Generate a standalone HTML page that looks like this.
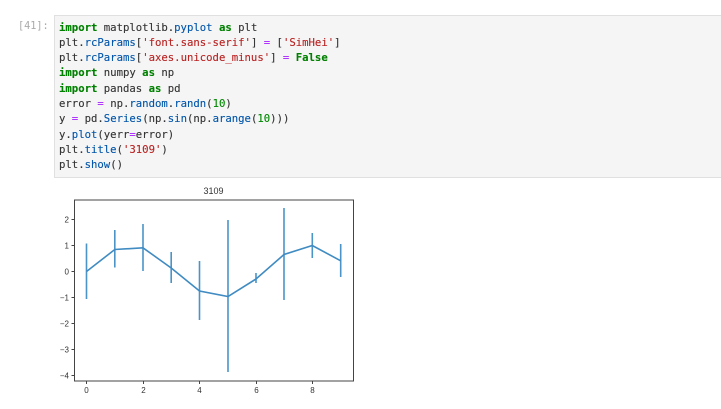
<!DOCTYPE html>
<html><head><meta charset="utf-8"><style>
html,body{margin:0;padding:0;background:#fff;width:721px;height:409px;overflow:hidden}
.cell{position:absolute;left:54px;top:15px;width:667px;height:163px;box-sizing:border-box;background:#f5f5f5;border:1px solid #e0e0e0;border-right:none}
pre{position:absolute;margin:0;left:4px;top:3.5px;font:10.64px/15.33px "DejaVu Sans Mono","Liberation Mono",monospace;color:#333;-webkit-text-stroke:0.12px}
.p{position:absolute;left:18px;top:19px;font:10.2px/15.33px "DejaVu Sans Mono","Liberation Mono",monospace;color:#aaa}
.k{color:#008000;font-weight:bold}.f{color:#0055aa}.s{color:#ba2121}.o{color:#aa22ff}.n{color:#008800}
svg{position:absolute;left:0;top:0}
svg text{font-family:"Liberation Sans",sans-serif;fill:#333}
</style></head><body>
<div class="p">[41]:</div>
<div class="cell"><pre><span class="k">import</span> matplotlib.<span class="f">pyplot</span> <span class="k">as</span> plt
plt.<span class="f">rcParams</span>[<span class="s">'font.sans-serif'</span>] <span class="o">=</span> [<span class="s">'SimHei'</span>]
plt.<span class="f">rcParams</span>[<span class="s">'axes.unicode_minus'</span>] <span class="o">=</span> <span class="k">False</span>
<span class="k">import</span> numpy <span class="k">as</span> np
<span class="k">import</span> pandas <span class="k">as</span> pd
error <span class="o">=</span> np.<span class="f">random</span>.<span class="f">randn</span>(<span class="n">10</span>)
y <span class="o">=</span> pd.<span class="f">Series</span>(np.<span class="f">sin</span>(np.<span class="f">arange</span>(<span class="n">10</span>)))
y.<span class="f">plot</span>(yerr<span class="o">=</span>error)
plt.<span class="f">title</span>(<span class="s">'3109'</span>)
plt.<span class="f">show</span>()</pre></div>
<svg width="721" height="409" viewBox="0 0 721 409">
<rect x="74.5" y="200" width="279" height="181" fill="none" stroke="#444" stroke-width="1"/>
<g stroke="#444" stroke-width="1">
<path d="M71.5 219.5h3M71.5 245.5h3M71.5 271.5h3M71.5 297.5h3M71.5 323.5h3M71.5 349.5h3M71.5 375.5h3"/>
<path d="M86.5 381v3M143.5 381v3M199.5 381v3M256.5 381v3M312.5 381v3"/>
</g>
<g stroke="#4a94c8" stroke-width="1.6" fill="none">
<path d="M86.5 243.5V299M114.8 230V267.5M143 224V271M171.2 252V283M199.5 261V320M228 220V372M256 273V283M284 208V300M312.3 233V258M340.7 244V277"/>
<path stroke="#3f8bc2" d="M86.5 271.5L114.8 249.5L143 247.8L171.2 268L199.5 291L228 296.5L256 279L284 254.5L312.3 245.5L340.7 260.8"/>
</g>
<g font-size="8" text-anchor="end">
<text x="69" y="222.5">2</text><text x="69" y="248.5">1</text><text x="69" y="274.5">0</text>
<text x="69" y="300.5">−1</text><text x="69" y="326.5">−2</text><text x="69" y="352.5">−3</text><text x="69" y="378.5">−4</text>
</g>
<g font-size="8" text-anchor="middle">
<text x="86.5" y="393">0</text><text x="143.5" y="393">2</text><text x="199.5" y="393">4</text><text x="256.5" y="393">6</text><text x="312.5" y="393">8</text>
</g>
<text x="213.5" y="194" font-size="9" text-anchor="middle">3109</text>
</svg>
</body></html>
